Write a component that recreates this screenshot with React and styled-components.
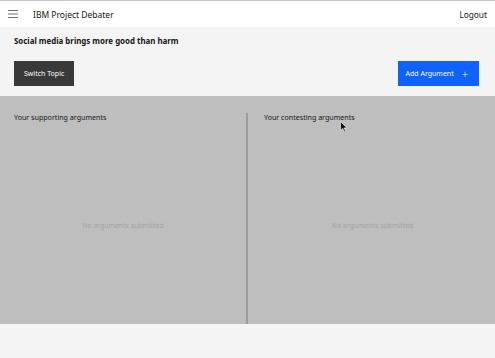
import React from 'react'
import styled, { createGlobalStyle } from 'styled-components'

const Global = createGlobalStyle`
body{
    margin:0;
    font-family:"Noto Sans","Open Sans",sans-serif;
    background:#f4f4f4;
}
`

export default () => {
    return (
        <Page>
            <Global />
            <Header>
                <Menu>
                    <svg width="10" height="8" viewBox="0 0 10 8">
                        <path d="M0 0.5h10M0 4h10M0 7.5h10" stroke="#6f6f6f" strokeWidth="1" />
                    </svg>
                </Menu>
                <Brand>IBM Project Debater</Brand>
                <Logout>Logout</Logout>
            </Header>
            <Topic>
                <Title>Social media brings more good than harm</Title>
                <Actions>
                    <Button dark>Switch Topic</Button>
                    <Button>
                        Add Argument
                        <Plus>+</Plus>
                    </Button>
                </Actions>
            </Topic>
            <Board>
                <Column>
                    <Label>Your supporting arguments</Label>
                    <Empty>No arguments submitted</Empty>
                </Column>
                <Column divided>
                    <Label>Your contesting arguments</Label>
                    <Empty>No arguments submitted</Empty>
                    <Cursor width="8" height="11" viewBox="0 0 8 11">
                        <path d="M0.5 0.5v9l2.2-2.1 1.6 3.3 1.3-0.6-1.6-3.2h3z" fill="#111" stroke="#fff" strokeWidth="0.6" />
                    </Cursor>
                </Column>
            </Board>
            <Footer />
        </Page>
    )
}

const Page = styled.div`
display:flex;
flex-direction:column;
width:495px;
height:358px;
overflow:hidden;
`

const Header = styled.div`
display:flex;
align-items:center;
height:26px;
background:#fff;
border-top:1px solid #c8c8c8;
padding:0 8px;
`

const Menu = styled.div`
display:flex;
align-items:center;
width:25px;
`

const Brand = styled.span`
flex:1;
font-size:8.5px;
color:#161616;
`

const Logout = styled.span`
font-size:8.3px;
color:#161616;
`

const Topic = styled.div`
display:flex;
flex-direction:column;
height:69px;
box-sizing:border-box;
padding:8px 16px 0 14px;
background:#f4f4f4;
`

const Title = styled.div`
font-size:7.9px;
font-weight:700;
color:#161616;
line-height:12px;
`

const Actions = styled.div`
display:flex;
justify-content:space-between;
margin-top:14px;
`

const Button = styled.div`
display:flex;
align-items:center;
height:25px;
box-sizing:border-box;
padding:0 ${p => p.dark ? '10px' : '11px'} 0 ${p => p.dark ? '10px' : '8px'};
background:${p => p.dark ? '#393939' : '#0f62fe'};
color:#fff;
font-size:7px;
`

const Plus = styled.span`
margin-left:8px;
font-size:11px;
font-weight:300;
`

const Board = styled.div`
display:grid;
grid-template-columns:246px 1fr;
height:228px;
box-sizing:border-box;
padding-top:17px;
background:#bebebe;
`

const Column = styled.div`
position:relative;
display:flex;
flex-direction:column;
padding-left:${p => p.divided ? '16px' : '14px'};
border-left:${p => p.divided ? '2px solid #9c9c9c' : 'none'};
`

const Label = styled.div`
font-size:7.1px;
color:#161616;
line-height:9px;
`

const Empty = styled.div`
margin-top:99px;
margin-left:-14px;
text-align:center;
font-size:6.9px;
color:#a4a4a4;
`

const Cursor = styled.svg`
position:absolute;
left:92px;
top:8px;
`

const Footer = styled.div`
flex:1;
background:#f4f4f4;
`
